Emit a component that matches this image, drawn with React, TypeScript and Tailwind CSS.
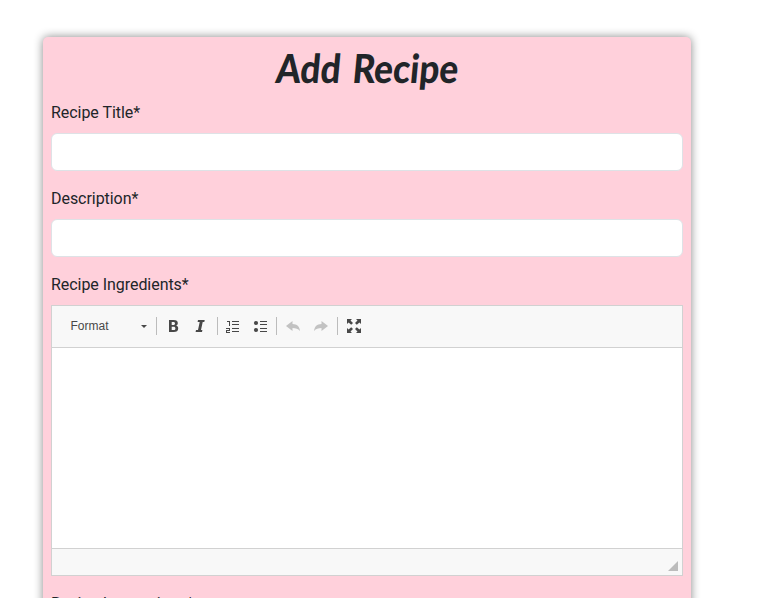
import React from "react";

const Separator = ({ className }: { className: string }) => (
  <span className={`h-[18px] w-px shrink-0 bg-[#bcbcbc] ${className}`} />
);

const Icon = ({ className = "", children }: { className?: string; children: React.ReactNode }) => (
  <svg viewBox="0 0 16 16" className={`h-4 w-4 shrink-0 ${className}`} fill="#484848">
    {children}
  </svg>
);

const Label = ({ children }: { children: string }) => (
  <label className="mb-2 block text-base leading-6 tracking-[-0.05px]">{children}</label>
);

const Field = ({ label }: { label: string }) => (
  <div className="mb-4">
    <Label>{label}</Label>
    <input className="block h-[38px] w-full rounded-md border border-[#dee2e6] bg-white px-3 outline-none" />
  </div>
);

const Toolbar = () => (
  <div className="flex h-[42px] items-center border-b border-[#d1d1d1] bg-[#f8f8f8] pb-px pl-[18.5px]">
    <span className="w-[70.5px] shrink-0 font-['Liberation_Sans',Arial,sans-serif] text-[12px] leading-4 text-[#484848]">
      Format
    </span>
    <svg viewBox="0 0 6 3" className="h-[3px] w-[6px] shrink-0" fill="#484848">
      <path d="M0 0h6L3 3z" />
    </svg>
    <Separator className="ml-[9px]" />
    <Icon className="ml-2">
      <path fillRule="evenodd" d="M4 2h4.600C11.600 2 12.800 3.200 12.800 5c0 1.300-.7 2.200-1.700 2.600C12.400 8 13.200 9 13.200 10.400c0 2.300-1.600 3.600-4.500 3.600H4zm2.700 2v3h1.600c1.200 0 1.700-.6 1.700-1.500S9.500 4 8.300 4zm0 4.800V12h1.800c1.300 0 1.900-.6 1.900-1.600s-.6-1.600-1.900-1.600z" />
    </Icon>
    <Icon className="ml-[11px]">
      <path d="M6 2h6.700l-.4 2h-1.600L9 12h1.400l-.4 2H3.600l.4-2h2L7.700 4H5.600z" />
    </Icon>
    <Separator className="ml-[9px]" />
    <Icon className="ml-1.5">
      <path d="M8 3h7v1H8zm0 3h7v1H8zm0 4h7v1H8zm0 3h7v1H8zM3 3h3v5H5V4H3zM2 10h4v3H3v1h3v1H2v-3h3v-1H2z" />
    </Icon>
    <Icon className="ml-3">
      <circle cx="4" cy="5" r="2.100" />
      <circle cx="4" cy="12" r="2.100" />
      <path d="M8 3h7v1H8zm0 3h7v1H8zm0 4h7v1H8zm0 3h7v1H8z" />
    </Icon>
    <Separator className="ml-2" />
    <Icon className="ml-2 opacity-30">
      <path d="M1 8 7.500 3v3c4.500.1 7 2.500 7.500 7-2-2.200-4.200-3-7.500-3v3z" />
    </Icon>
    <Icon className="ml-3 opacity-30">
      <path d="M15 8 8.500 3v3C4 6.100 1.500 8.500 1 13c2-2.200 4.200-3 7.500-3v3z" />
    </Icon>
    <Separator className="ml-2" />
    <Icon className="ml-2">
      <path d="M1 1h5L4.500 2.500 7 5 5.200 6.800 2.600 4.400 1 6zM15 1v5l-1.600-1.600-2.600 2.400L9 5l2.500-2.500L10 1zM1 15v-5l1.600 1.600 2.600-2.400L7 11l-2.500 2.500L6 15zM15 15h-5l1.500-1.500L9 11l1.800-1.800 2.600 2.400L15 10z" />
    </Icon>
  </div>
);

export default function App() {
  return (
    <main className="h-[598px] overflow-hidden bg-white pl-[43px] pt-[37px] font-[Roboto,sans-serif] text-[#212529]">
      <section className="h-[700px] w-[648px] rounded-[5px] bg-[#ffd0db] p-2 shadow-[0_0_10px_#888]">
        <h1 className="mb-2 flex h-12 items-center justify-center whitespace-nowrap pb-0.5 font-[Lato,sans-serif] text-[40px] font-black leading-[48px]">
          <span className="inline-block origin-center -skew-x-6 scale-x-[0.88] [word-spacing:4px]">Add Recipe</span>
        </h1>
        <Field label="Recipe Title*" />
        <Field label="Description*" />
        <Label>Recipe Ingredients*</Label>
        <div className="mb-4 border border-[#d1d1d1]">
          <Toolbar />
          <div className="h-[200px] bg-white" />
          <div className="flex h-[27px] items-end justify-end border-t border-[#d1d1d1] bg-[#f8f8f8] pb-1 pr-1">
            <svg viewBox="0 0 10 10" className="h-[10px] w-[10px]" fill="#bcbcbc">
              <path d="M10 0v10H0z" />
            </svg>
          </div>
        </div>
        <Label>Recipe Instructions*</Label>
      </section>
    </main>
  );
}
